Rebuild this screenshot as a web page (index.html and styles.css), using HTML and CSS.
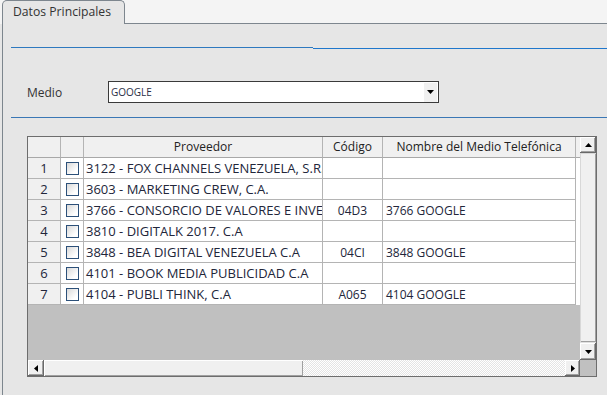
FILE: index.html
```html
<!DOCTYPE html>
<html lang="es">
<head>
<meta charset="utf-8">
<title>Datos Principales</title>
<link rel="stylesheet" href="styles.css">
</head>
<body>
<div class="tabstrip">
  <div class="tab">Datos Principales</div>
  <div class="tabfill"></div>
</div>
<div class="panel">
  <div class="rule1"><div class="seg seg-a"></div><div class="seg seg-b"></div></div>
  <div class="field">
    <span class="lbl">Medio</span>
    <div class="select">
      <span class="val">GOOGLE</span>
      <span class="drop"><svg width="7" height="4" viewBox="0 0 7 4"><polygon points="0,0 7,0 3.5,4" fill="#000"/></svg></span>
    </div>
  </div>
  <div class="rule2"></div>
  <div class="grid">
    <div class="view">
      <div class="row head">
        <div class="c"></div><div class="c"></div><div class="c">Proveedor</div><div class="c">Código</div><div class="c">Nombre del Medio Telefónica</div><div class="c f"></div>
      </div>
      <div class="row"><div class="c n">1</div><div class="c k"><span class="box"></span></div><div class="c p">3122 - FOX CHANNELS VENEZUELA, S.R.L</div><div class="c cd"></div><div class="c nm"></div><div class="c f"></div></div>
      <div class="row"><div class="c n">2</div><div class="c k"><span class="box"></span></div><div class="c p">3603 - MARKETING CREW, C.A.</div><div class="c cd"></div><div class="c nm"></div><div class="c f"></div></div>
      <div class="row"><div class="c n">3</div><div class="c k"><span class="box"></span></div><div class="c p">3766 - CONSORCIO DE VALORES E INVERSIONES</div><div class="c cd">04D3</div><div class="c nm">3766 GOOGLE</div><div class="c f"></div></div>
      <div class="row"><div class="c n">4</div><div class="c k"><span class="box"></span></div><div class="c p">3810 - DIGITALK 2017. C.A</div><div class="c cd"></div><div class="c nm"></div><div class="c f"></div></div>
      <div class="row"><div class="c n">5</div><div class="c k"><span class="box"></span></div><div class="c p">3848 - BEA DIGITAL VENEZUELA C.A</div><div class="c cd">04CI</div><div class="c nm">3848 GOOGLE</div><div class="c f"></div></div>
      <div class="row"><div class="c n">6</div><div class="c k"><span class="box"></span></div><div class="c p">4101 - BOOK MEDIA PUBLICIDAD C.A</div><div class="c cd"></div><div class="c nm"></div><div class="c f"></div></div>
      <div class="row"><div class="c n">7</div><div class="c k"><span class="box"></span></div><div class="c p">4104 - PUBLI THINK, C.A</div><div class="c cd">A065</div><div class="c nm">4104 GOOGLE</div><div class="c f"></div></div>
      <div class="empty"></div>
    </div>
    <div class="vscroll">
      <div class="btn up"><svg width="7" height="4" viewBox="0 0 7 4"><polygon points="0,4 7,4 3.5,0" fill="#000"/></svg></div>
      <div class="vthumb"></div>
      <div class="btn down"><svg width="7" height="4" viewBox="0 0 7 4"><polygon points="0,0 7,0 3.5,4" fill="#000"/></svg></div>
    </div>
    <div class="hscroll">
      <div class="btn left"><svg width="4" height="7" viewBox="0 0 4 7"><polygon points="4,0 4,7 0,3.5" fill="#000"/></svg></div>
      <div class="hthumb"></div>
      <div class="htrack"></div>
      <div class="btn right"><svg width="4" height="7" viewBox="0 0 4 7"><polygon points="0,0 0,7 4,3.5" fill="#000"/></svg></div>
    </div>
    <div class="corner"></div>
  </div>
</div>
</body>
</html>
```

FILE: styles.css
```css
html, body {
  margin: 0;
  padding: 0;
}
body {
  background: #e6e6e6;
  font-family: "Open Sans", "DejaVu Sans", sans-serif;
  font-size: 12px;
  color: #333;
  width: 607px;
  height: 395px;
  overflow: hidden;
}
.tabstrip {
  display: flex;
  height: 24px;
  background: #f4f4f4;
}
.tab {
  margin-left: 2px;
  width: 123px;
  box-sizing: border-box;
  height: 24px;
  border: 1px solid #7d868e;
  border-bottom: none;
  border-radius: 5px 5px 0 0;
  background: #e6e6e6;
  padding-left: 10px;
  line-height: 21px;
  font-size: 12.2px;
  color: #333;
}
.tabfill {
  flex: 1;
  height: 23px;
  border-bottom: 1px solid #7d868e;
}
.panel {
  margin-left: 2px;
  border-left: 1px solid #7d868e;
  height: 371px;
  background: #e6e6e6;
}
.rule1 {
  display: flex;
  padding-top: 23px;
  margin-left: 8px;
  height: 2px;
}
.seg-a {
  width: 302px;
  height: 1px;
  background: #2e79bf;
}
.seg-b {
  flex: 1;
  height: 1px;
  margin-top: 1px;
  background: #1f77cc;
}
.field {
  display: flex;
  align-items: center;
  margin-top: 32px;
  padding-left: 24px;
  height: 22px;
}
.lbl {
  width: 81px;
  color: #333;
}
.select {
  width: 331px;
  height: 22px;
  box-sizing: border-box;
  border: 1px solid #3a3a3a;
  background: #fff;
  display: flex;
  align-items: center;
  justify-content: space-between;
  padding: 0 1px 0 2px;
}
.val {
  font-size: 10px;
  color: #2a2f45;
}
.drop {
  width: 13px;
  height: 19px;
  background: #f0f0f0;
  display: flex;
  align-items: center;
  justify-content: center;
}
.rule2 {
  margin-top: 14px;
  margin-left: 8px;
  height: 1px;
  background: #3a77b5;
}
.grid {
  margin-top: 18px;
  margin-left: 24px;
  width: 570px;
  height: 241px;
  box-sizing: border-box;
  border: 1px solid #6d6d6d;
  display: grid;
  grid-template-columns: 552px 16px;
  grid-template-rows: 223px 16px;
}
.view {
  display: flex;
  flex-direction: column;
  background: #fff;
  overflow: hidden;
}
.row {
  display: grid;
  grid-template-columns: 33px 23px 239px 60px 193px 4px;
  height: 21px;
  flex: none;
}
.c {
  box-sizing: border-box;
  border-right: 1px solid #b4b4b4;
  border-bottom: 1px solid #b4b4b4;
  white-space: nowrap;
  overflow: hidden;
  line-height: 20px;
  color: #22263a;
}
.c.f {
  border-right: none;
  border-bottom: none;
}
.head .c {
  background: #f0f0f0;
  text-align: center;
  color: #222;
  border-bottom-color: #a8a8a8;
}
.head .c.f {
  border-bottom: 1px solid #a8a8a8;
}
.n {
  background: #f0f0f0;
  text-align: center;
  font-size: 13px;
  line-height: 21px;
}
.k {
  display: flex;
  align-items: center;
  justify-content: center;
}
.box {
  width: 13px;
  height: 13px;
  box-sizing: border-box;
  border: 1px solid #2c5079;
  background: linear-gradient(135deg, #d8d8d8, #ffffff 75%);
}
.p {
  padding-left: 2px;
  font-size: 13px;
  line-height: 21px;
}
.cd {
  text-align: center;
  line-height: 21px;
}
.nm {
  padding-left: 3px;
  line-height: 21px;
}
.empty {
  flex: 1;
  background: #c0c0c0;
}
.vscroll {
  display: flex;
  flex-direction: column;
  background: #e0e0e0;
}
.btn {
  box-sizing: border-box;
  background: #f0f0f0;
  box-shadow: inset -1px -1px #696969, inset 1px 1px #ffffff, inset -2px -2px #a0a0a0;
  display: flex;
  align-items: center;
  justify-content: center;
}
.up {
  height: 16px;
  flex: none;
}
.vthumb {
  flex: 1;
  margin-bottom: 1px;
  background: #f0f0f0;
  box-shadow: inset 1px 1px #d8d8d8, inset -1px -1px #a0a0a0;
}
.down {
  height: 17px;
  flex: none;
}
.hscroll {
  display: flex;
}
.left {
  width: 16px;
  flex: none;
}
.hthumb {
  width: 259px;
  flex: none;
  background: #f0f0f0;
  box-shadow: inset 1px 1px #ffffff, inset -1px -1px #a0a0a0;
}
.htrack {
  flex: 1;
  background: repeating-conic-gradient(#ffffff 0 25%, #e4e4e4 0 50%) 0 0 / 2px 2px;
}
.right {
  width: 15px;
  flex: none;
}
.corner {
  background: #c0c0c0;
}
```
